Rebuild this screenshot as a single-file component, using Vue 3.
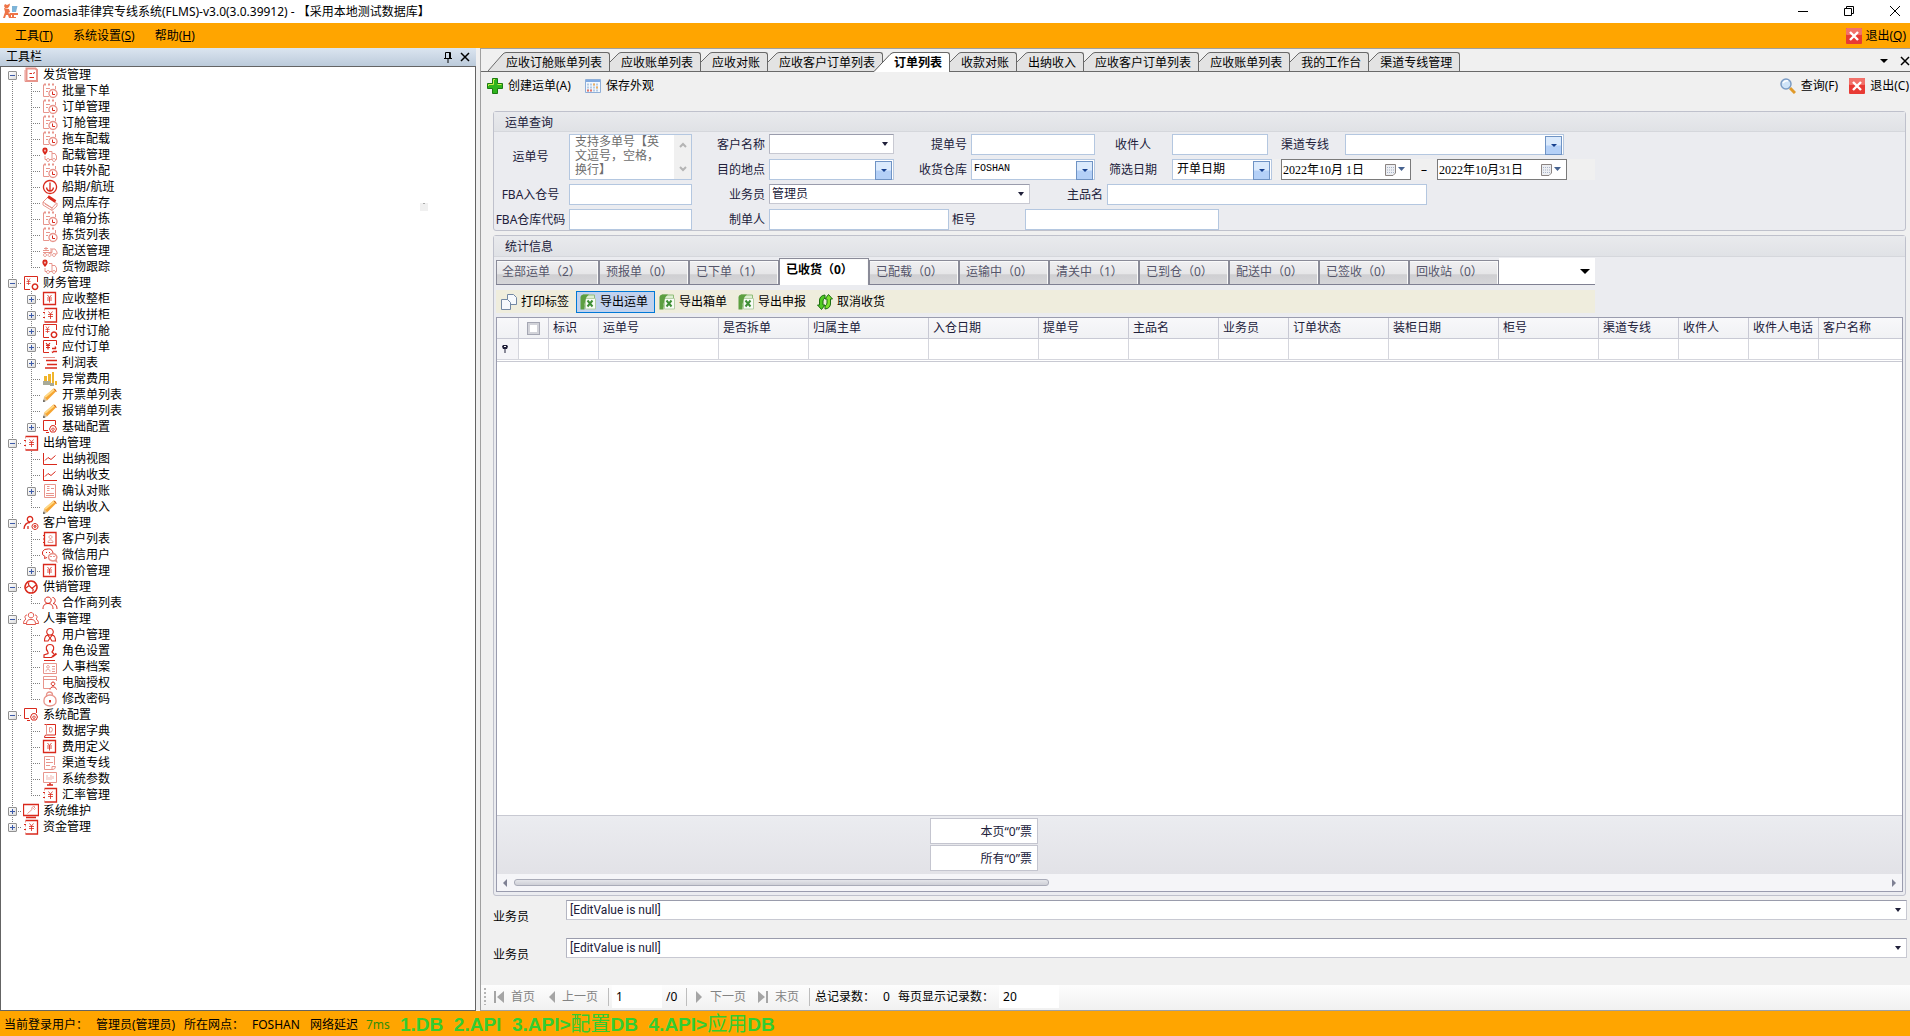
<script setup>
import { ref } from 'vue'

const R = '#d9291c'
const P = '#e8958c'

// Each icon is a list of shapes on a 16x16 grid: d = path, s = stroke, f = fill, w = stroke width.
const icons = {
  doc: [{ d: 'M2 3V14.500H11', s: P }, { d: 'M3.500 1.500H12.500L14 3V14H3.500Z', s: P, w: 2 }, { d: 'M6.500 6.500H9M10 6.500l2-1M6.500 10.500H11', s: R }],
  order: [{ d: 'M7 13.500H1.500V1.500M13.500 3V6', s: P }, { d: 'M2 1.500H13', s: P, w: 2, dash: '2 2' }, { d: 'M4 5.500H8M4 8.500H6', s: P }, { d: 'M11 6.500a4 4 0 1 0 .01 0Z', s: P, w: 1.300 }, { d: 'M10.500 8.500V11.500H13', s: R }],
  truck: [{ d: 'M3 6.500C.500 4 1 1.500 3 1.500S5.500 4 3 6.500Z', s: R, w: 2 }, { d: 'M3 9V12.500H5M7 4.500H10V12.500M10 6.500H13L14.500 9V12.500H13M7 12.500H10', s: P }, { d: 'M6 11.500a1.500 1.500 0 1 0 .01 0M12 11.500a1.500 1.500 0 1 0 .01 0', s: P }],
  anchor: [{ d: 'M8 1.500a6.500 6.500 0 1 0 .01 0Z', s: R, w: 1.300 }, { d: 'M8 5V12M4.500 8.500C5 11 6.500 12 8 12S11 11 11.500 8.500M8 3.500v2', s: R, w: 1.300 }],
  box: [{ d: 'M1 7L6 2L14.500 8L10 13ZM1 7V10L10 15.500L15 11V8M3 9L10 13V15', s: P }, { d: 'M6 1.500L13.500 6.500', s: R, w: 3 }],
  cart: [{ d: 'M1 7.500H7M2 5.500H6M4 4V7M1 9.500H10V6H13L15 9V11H13M9 5V11', s: P }, { d: 'M3 10.500a1.500 1.500 0 1 0 .01 0M7.500 10.500a1.500 1.500 0 1 0 .01 0M12 10.500a1.500 1.500 0 1 0 .01 0', s: P }],
  yenGear: [{ d: 'M7 14.500H1.500V1.500H14.500V7', s: R }, { d: 'M4 3.500L5.500 6L7 3.500M3.500 6.500H7.500M3.500 8.500H7.500M5.500 6V10', s: R, w: 0.700 }, { d: 'M12 9a2.700 2.700 0 1 0 .01 0Z', s: R, w: 1.500 }],
  yenBox: [{ d: 'M1.500 1.500H13.500V13.500H1.500Z', s: R, w: 1.300 }, { d: 'M5.500 4L7.500 6.500L9.500 4M5 7H10M5 9H10M7.500 6.500V11.500', s: R, w: 0.800 }],
  yenBook: [{ d: 'M2.500 1.500H14.500V15H2.500', s: R, w: 1.300 }, { d: 'M2.500 1.500V15', s: P, dash: '2 2' }, { d: 'M1 5.500H3M1 10.500H3', s: R }, { d: 'M6.500 4.500L8.500 7L10.500 4.500M6 7.500H11M6 9.500H11M8.500 7V12', s: R, w: 0.800 }],
  yenPay: [{ d: 'M7 13.500H1.500V1.500H14.500V6', s: R }, { d: 'M4 4L6 6.500L8 4M4 6.500H8M4 8.500H8M6 6V10.500', s: R, w: 1.200 }, { d: 'M10 9.500H14M11 12.500H15M13 7.500L14 9.500M11 14L10 12.500', s: R, w: 1.300 }],
  lines: [{ d: 'M1 2.500H13', s: P }, { d: 'M4 5.500H15M5 9.500H15', s: R, w: 1.500 }, { d: 'M3 13H15', s: R, w: 1.500 }],
  bars: [{ d: 'M2 5H5V14H2ZM6 3H9V13H6ZM10 1H12V13H10ZM13 10H15V14H13Z', f: '#f0b52c' }, { d: 'M1 10H8V14H1ZM8 12H12V15H8Z', f: '#a8aa98' }],
  pencil: [{ d: 'M2 10L11.500 1.500Q14 1 14.500 4L5 13.500Z', f: '#f6a532' }, { d: 'M3 10L12 2.500', s: '#ffd985', w: 2 }, { d: 'M2 10L5 13.500L1 15Z', f: '#d8c09a' }, { d: 'M1.500 12.500L3.500 14.500L1 15Z', f: '#555' }, { d: 'M12 2L14.500 4.500', s: '#c76a35' }],
  setGear: [{ d: 'M6 11.500H1.500V1.500H13.500V6M4 13.500H7', s: R }, { d: 'M11 6.500L13 7L14.500 10L13 13L9 13L7.500 10L9 7ZM11 9a1.200 1.200 0 1 0 .01 0', s: R }],
  chart: [{ d: 'M1.500 2V13.500H15', s: R }, { d: 'M3 9.500L6 6.500L9 8.500L13.500 4.500', s: R }],
  receipt: [{ d: 'M2.500 1.500H13.500V14.500H2.500Z', s: P }, { d: 'M5 3.500H7.500M5 5.500H7.500M5 7.500H7.500M9 5.500H12M4 10.500H12M4 12.500H12', s: P }],
  personGear: [{ d: 'M7 1.500a2.700 2.700 0 1 0 .01 0ZM1 14C1.500 9 4 7.500 7 7.500M5 14V11', s: R, w: 1.300 }, { d: 'M12 8.500a3 3 0 1 0 .01 0M12 10.500a1 1 0 1 0 .01 0', s: R }],
  contact: [{ d: 'M2.500 1.500H14V14.500H2.500Z', s: R, w: 1.300 }, { d: 'M1 4.500H3M1 8H3M1 11.500H3', s: R }, { d: 'M8.500 4.500a1.500 1.500 0 1 0 .01 0M6 11.500C6 8 11 8 11 11.500Z', s: P }],
  wechat: [{ d: 'M6 2a5 4 0 0 0-3 7.500L2.500 11.500L5 10.500M11 6C10 1 6 2 6 2', s: R }, { d: 'M10.500 6.500a4.500 3.700 0 1 0 2.500 7L14.500 14.500L14 12.500C16 10 14 6.500 10.500 6.500Z', s: P, w: 1.500 }, { d: 'M4.500 5V6M7.500 5V6M9 9V10M12 9V10', s: R }],
  supply: [{ d: 'M8 2a6 6 0 1 0 .01 0Z', s: R, w: 1.500 }, { d: 'M3 9L6 6.500L9 9.500L13 6M6 3.500C5 5 5.500 6 6.500 6.500M9 9.500C10.500 10 10.500 11 9.500 12.500', s: R, w: 1.200 }],
  people2: [{ d: 'M6 2a3.200 3.200 0 1 0 .01 0ZM1 14C1 10 3 8.500 6 8.500S11 10 11 14', s: R }, { d: 'M10.500 2.500C14 2.500 14 8 11 8.500C14 9 15 11 15 14', s: R }],
  people3: [{ d: 'M8 1.500a2.700 2.700 0 1 0 .01 0ZM3.500 13.500C3.500 9.500 5 8.500 8 8.500S12.500 9.500 12.500 13.500ZM4 4C1.500 4 1.500 7 3 8C1 9 .500 11 .500 12.500H3M12 4C14.500 4 14.500 7 13 8C15 9 15.500 11 15.500 12.500H13', s: R, w: 0.800 }],
  user: [{ d: 'M8 1.500a3.300 3.300 0 1 0 .01 0ZM2.500 14C2.500 10.500 4 8.500 5.500 8L8 11L10.500 8C12 8.500 13.500 10.500 13.500 14H10L8 11L6 14Z', s: R, w: 1.100 }],
  role: [{ d: 'M6 9C3 6 4 1.500 8 1.500S13 6 10 9L12 11M6 9L6 10.500L2 12V14.500H10', s: R, w: 1.200 }, { d: 'M10 14L14.500 10.500', s: R, w: 2 }],
  card: [{ d: 'M2 1.500H13', s: R }, { d: 'M1.500 4.500H14.500V14.500H1.500Z', s: P }, { d: 'M6 6.500a1.300 1.300 0 1 0 .01 0M4 12.500C4 9.500 8 9.500 8 12.500M10 7.500H13M10 10H13M10 12.500H13', s: P }],
  winUser: [{ d: 'M8 13.500H1.500V1.500H14.500V6M1.500 4.500H14.500', s: P }, { d: 'M11 7a1.800 1.800 0 1 0 .01 0M8 14.500C8.500 11 13.500 11 14.500 14.500', s: R }],
  lock: [{ d: 'M2 9a6 5 0 0 1 12 0V11a6 4 0 0 1-12 0Z', s: P, w: 1.300 }, { d: 'M4.500 6V4C4.500 0 10.500 0 10.500 4', s: P, w: 1.300 }, { d: 'M8 9V11.500', s: R, w: 2 }],
  dict: [{ d: 'M2.500 1.500H13.500V12H4Q2.500 12 2.500 14.500H13.500', s: R }, { d: 'M4.500 1.500V12', s: P }, { d: 'M7.500 4.500H9.500Q11.500 6.500 9.500 9H7.500Z', s: P }],
  docLines: [{ d: 'M2.500 14.500V1.500H12.500V10M2.500 14.500H11Q13.500 14 13.500 11.500H10V14', s: P }, { d: 'M4 4.500H8M4 7.500H11M4 10.500H8', s: P }],
  monitor: [{ d: 'M1.500 1.500H14.500V11.500H1.500Z', s: P }, { d: 'M5 4V9M7 6V9M9 4V9M11 5V8', s: P, w: 0.700 }, { d: 'M5 14H11M8 12V14', s: R, w: 1.500 }],
  wrench: [{ d: 'M.500 1.500H15.500V12.500H.500ZM3 14.500H13', s: R, w: 1.300 }, { d: 'M4.500 10.500L9 6.500C8 4 11 2.500 12 4L10.500 5.500L11.500 6.500L12.500 5.500', s: P }],
}

const tree = [
  { t: '发货管理', i: 'doc', c: [
    ['批量下单', 'order'], ['订单管理', 'order'], ['订舱管理', 'order'], ['拖车配载', 'order'],
    ['配载管理', 'truck'], ['中转外配', 'order'], ['船期/航班', 'anchor'], ['网点库存', 'box'],
    ['单箱分拣', 'order'], ['拣货列表', 'order'], ['配送管理', 'cart'], ['货物跟踪', 'truck'] ] },
  { t: '财务管理', i: 'yenGear', c: [
    ['应收整柜', 'yenBox', 1], ['应收拼柜', 'yenBook', 1], ['应付订舱', 'yenGear', 1], ['应付订单', 'yenPay', 1],
    ['利润表', 'lines', 1], ['异常费用', 'bars'], ['开票单列表', 'pencil'], ['报销单列表', 'pencil'], ['基础配置', 'setGear', 1] ] },
  { t: '出纳管理', i: 'yenBook', c: [
    ['出纳视图', 'chart'], ['出纳收支', 'chart'], ['确认对账', 'receipt', 1], ['出纳收入', 'pencil'] ] },
  { t: '客户管理', i: 'personGear', c: [ ['客户列表', 'contact'], ['微信用户', 'wechat'], ['报价管理', 'yenBox', 1] ] },
  { t: '供销管理', i: 'supply', c: [ ['合作商列表', 'people2'] ] },
  { t: '人事管理', i: 'people3', c: [
    ['用户管理', 'user'], ['角色设置', 'role'], ['人事档案', 'card'], ['电脑授权', 'winUser'], ['修改密码', 'lock'] ] },
  { t: '系统配置', i: 'setGear', c: [
    ['数据字典', 'dict'], ['费用定义', 'yenBox'], ['渠道专线', 'docLines'], ['系统参数', 'monitor'], ['汇率管理', 'yenBook'] ] },
  { t: '系统维护', i: 'wrench', c: [] },
  { t: '资金管理', i: 'yenBook', c: [] },
]

const menus = [['工具', 'T'], ['系统设置', 'S'], ['帮助', 'H']]
const docTabs = ['应收订舱账单列表', '应收账单列表', '应收对账', '应收客户订单列表', '订单列表', '收款对账', '出纳收入', '应收客户订单列表', '应收账单列表', '我的工作台', '渠道专线管理']
const activeDoc = ref(4)
const statusTabs = ['全部运单（2）', '预报单（0）', '已下单（1）', '已收货（0）', '已配载（0）', '运输中（0）', '清关中（1）', '已到仓（0）', '配送中（0）', '已签收（0）', '回收站（0）']
const activeStatus = ref(3)
const exportsBar = ['导出运单', '导出箱单', '导出申报']
const columns = [['标识', 50], ['运单号', 120], ['是否拆单', 90], ['归属主单', 120], ['入仓日期', 110], ['提单号', 90], ['主品名', 90], ['业务员', 70], ['订单状态', 100], ['装柜日期', 110], ['柜号', 100], ['渠道专线', 80], ['收件人', 70], ['收件人电话', 70], ['客户名称', 0]]
const dateFrom = ref('2022年10月 1日')
const dateTo = ref('2022年10月31日')
const page = ref('1')
const pageSize = ref('20')
</script>

<template>
  <div class="app">
    <header class="titlebar">
      <svg class="i16" viewBox="0 0 16 16"><path d="M3 1L5 2L8 .500L7.500 3L6 5L3 5L2 3ZM2 5L7 6L8 9L6 10L9 11V15H7L6 12H4L3 15H1L3 9Z" fill="#ee7447" /><path d="M10 3H15.500L14 9H10Z" fill="#7db4d8" /><path d="M8 10H16V12H12V14H14V15H9V14H10V12H8Z" fill="#ee7447" /></svg>
      <h1>Zoomasia菲律宾专线系统(FLMS)-v3.0(3.0.39912) - 【采用本地测试数据库】</h1>
      <div class="winbtns">
        <button aria-label="最小化"><svg viewBox="0 0 12 12"><path d="M1 6.500H11" /></svg></button>
        <button aria-label="还原"><svg viewBox="0 0 12 12"><path d="M1.500 3.500H8.500V10.500H1.500ZM3.500 3.500V1.500H10.500V8.500H8.500" /></svg></button>
        <button aria-label="关闭"><svg viewBox="0 0 12 12"><path d="M1 1L11 11M11 1L1 11" /></svg></button>
      </div>
    </header>

    <nav class="menubar">
      <button v-for="m in menus" :key="m[1]">{{ m[0] }}(<u>{{ m[1] }}</u>)</button>
      <button class="exit">
        <svg class="i16" viewBox="0 0 16 16"><rect width="16" height="16" rx="1" fill="#e83a34" /><rect width="16" height="7" rx="1" fill="#f2716a" /><path d="M4 4L12 12M12 4L4 12" stroke="#fff" stroke-width="2.400" /></svg>
        <span>退出(<u>Q</u>)</span>
      </button>
    </nav>

    <div class="body">
      <aside class="side">
        <div class="side-head">
          <h2>工具栏</h2>
          <button aria-label="固定"><svg width="10" height="12" viewBox="0 0 10 12"><path d="M2.500 7V1.500H7.500V7M6.500 2V7M1 7.500H9M5 8V12" fill="none" stroke="#000" /></svg></button>
          <button aria-label="关闭"><svg width="10" height="10" viewBox="0 0 10 10"><path d="M1 1L9 9M9 1L1 9" stroke="#000" stroke-width="1.500" /></svg></button>
        </div>
        <div class="side-body">
          <ul class="tree">
            <li v-for="(n, k) in tree" :key="n.t">
              <div class="row">
                <span class="guide arm" :class="{ first: k === 0, last: k === tree.length - 1 }"><i class="exp" :class="{ plus: !n.c.length }"></i></span>
                <svg class="i16" viewBox="0 0 16 16"><path v-for="(p, j) in icons[n.i]" :key="j" :d="p.d" :fill="p.f || 'none'" :stroke="p.s || 'none'" :stroke-width="p.w || 1" :stroke-dasharray="p.dash" /></svg>
                <span>{{ n.t }}</span>
              </div>
              <ul v-if="n.c.length">
                <li v-for="(c, m) in n.c" :key="c[0]" class="row">
                  <span class="guide"></span>
                  <span class="guide arm" :class="{ last: m === n.c.length - 1 }"><i v-if="c[2]" class="exp plus"></i></span>
                  <svg class="i16" viewBox="0 0 16 16"><path v-for="(p, j) in icons[c[1]]" :key="j" :d="p.d" :fill="p.f || 'none'" :stroke="p.s || 'none'" :stroke-width="p.w || 1" :stroke-dasharray="p.dash" /></svg>
                  <span>{{ c[0] }}</span>
                </li>
              </ul>
            </li>
          </ul>
          <span class="float-mark"></span>
        </div>
      </aside>

      <main class="main">
        <div class="doctabs">
          <button v-for="(t, k) in docTabs" :key="k" :class="{ on: k === activeDoc, first: k === 0 }" @click="activeDoc = k">
            <svg v-if="k === activeDoc" width="20" height="20" viewBox="0 0 20 20"><path d="M0 19.500L16 2.500Q18 .500 20 .500V20H0Z" fill="#fff" /><path d="M0 19.500L16 2.500Q18 .500 20 .500" fill="none" stroke="#5a5a5a" /></svg>
            <svg v-else-if="k === 0" width="18" height="20" viewBox="0 0 18 20"><path d="M0 19L14 3Q16 .500 18 .500V19Z" fill="#e3e3e3" /><path d="M0 19L14 3Q16 .500 18 .500" fill="none" stroke="#6a6a6a" /></svg>
            <svg v-else width="11" height="20" viewBox="0 0 11 20"><path d="M0 10L7 3Q9 .500 11 .500V19H0Z" fill="#e3e3e3" /><path d="M0 10L7 3Q9 .500 11 .500" fill="none" stroke="#6a6a6a" /></svg>
            <span>{{ t }}</span>
          </button>
          <div class="tabctl">
            <button aria-label="标签列表"><svg width="8" height="4" viewBox="0 0 8 4"><path d="M0 0H8L4 4Z" /></svg></button>
            <button aria-label="关闭标签"><svg width="10" height="10" viewBox="0 0 10 10"><path d="M1 1L9 9M9 1L1 9" stroke="#000" stroke-width="1.500" /></svg></button>
          </div>
        </div>

        <div class="toolbar">
          <button>
            <svg class="i16" viewBox="0 0 16 16"><path d="M5.500 .500H10.500V5.500H15.500V10.500H10.500V15.500H5.500V10.500H.500V5.500H5.500Z" fill="#2fb51d" stroke="#1c7a12" /><path d="M6.500 6.500V1.500H8M1.500 8V6.500H6.500M10.500 6.500H14.500" fill="none" stroke="#c9ee4c" /></svg>
            <span>创建运单(A)</span>
          </button>
          <button>
            <svg class="i16" viewBox="0 0 16 16"><path d="M.500 1.500H15.500V14.500H.500Z" fill="#f4f8fd" stroke="#8fafd8" /><path d="M1 2H15V4H1Z" fill="#7fa9e0" /><path d="M2 6.500H14M2 9.500H14M2 12.500H14" stroke="#b4cbe4" stroke-width="2" stroke-dasharray="2 1" /><path d="M8 6.500H10M11 9.500H13" stroke="#f0b060" stroke-width="2" /><path d="M2 12.500H7" stroke="#e8786a" stroke-width="2" stroke-dasharray="2 1" /></svg>
            <span>保存外观</span>
          </button>
          <div class="right">
            <button>
              <svg class="i16" viewBox="0 0 16 16"><path d="M10 10L15 15" stroke="#e09a2a" stroke-width="3" /><circle cx="6" cy="6" r="5" fill="#cfe4f8" stroke="#7b9cc4" stroke-width="1.500" /><path d="M3 5Q5 2 8 3" stroke="#fff" fill="none" stroke-width="1.500" /></svg>
              <span>查询(F)</span>
            </button>
            <button>
              <svg class="i16" viewBox="0 0 16 16"><rect width="16" height="16" rx="1" fill="#e83a34" /><rect width="16" height="7" rx="1" fill="#f2716a" /><path d="M4 4L12 12M12 4L4 12" stroke="#fff" stroke-width="2.400" /></svg>
              <span>退出(C)</span>
            </button>
          </div>
        </div>

        <section class="group">
          <h3>运单查询</h3>
          <form class="query" @submit.prevent>
            <div class="qleft">
              <label for="no">运单号</label>
              <div class="memo"><textarea id="no" placeholder="支持多单号【英文逗号，空格，换行】"></textarea><span class="vbar"><svg width="8" height="6" viewBox="0 0 8 6"><path d="M1 5L4 2L7 5" /></svg><svg width="8" height="6" viewBox="0 0 8 6"><path d="M1 1L4 4L7 1" /></svg></span></div>
              <label for="fba1">FBA入仓号</label><input id="fba1" class="tx">
              <label for="fba2">FBA仓库代码</label><input id="fba2" class="tx">
            </div>
            <div class="qright">
              <div class="line">
                <label class="l1" for="cust">客户名称</label>
                <div class="combo flat w125"><select id="cust"><option></option></select></div>
                <label class="l2" for="bl">提单号</label><input id="bl" class="tx w124">
                <label class="l3 short" for="rcv">收件人</label><input id="rcv" class="tx w96">
                <label class="l4" for="ch">渠道专线</label>
                <div class="combo w219"><select id="ch"><option></option></select></div>
              </div>
              <div class="line">
                <label class="l1" for="dest">目的地点</label>
                <div class="combo w125"><select id="dest"><option></option></select></div>
                <label class="l2" for="wh">收货仓库</label>
                <div class="combo mono w124"><select id="wh"><option>FOSHAN</option></select></div>
                <label class="l3" for="dt">筛选日期</label>
                <div class="combo w100 pad"><select id="dt"><option>开单日期</option></select></div>
                <div class="dates">
                  <div class="date"><input v-model="dateFrom" aria-label="开始日期"><svg width="22" height="14" viewBox="0 0 22 14"><path d="M1.500 1.500H11.500V10L9 12.500H1.500Z" fill="#eceef2" stroke="#8b8482" /><path d="M3 4.500H10M3 7H10M3 9.500H10" stroke="#a9b4c8" stroke-dasharray="1 1" /><path d="M14 4H21L17.500 8Z" fill="#46628f" /></svg></div>
                  <span>–</span>
                  <div class="date"><input v-model="dateTo" aria-label="结束日期"><svg width="22" height="14" viewBox="0 0 22 14"><path d="M1.500 1.500H11.500V10L9 12.500H1.500Z" fill="#eceef2" stroke="#8b8482" /><path d="M3 4.500H10M3 7H10M3 9.500H10" stroke="#a9b4c8" stroke-dasharray="1 1" /><path d="M14 4H21L17.500 8Z" fill="#46628f" /></svg></div>
                </div>
              </div>
              <div class="line">
                <label class="l1" for="sales">业务员</label>
                <div class="combo flat w261"><select id="sales"><option>管理员</option></select></div>
                <label class="l5" for="prod">主品名</label><input id="prod" class="tx w320">
              </div>
              <div class="line">
                <label class="l1" for="maker">制单人</label><input id="maker" class="tx w180">
                <label class="l6" for="cab">柜号</label><input id="cab" class="tx w194">
              </div>
            </div>
          </form>
        </section>

        <section class="group stats">
          <h3>统计信息</h3>
          <div class="sbody">
            <div class="stabs">
              <button v-for="(t, k) in statusTabs" :key="t" :class="{ on: k === activeStatus, wide: k === 0 }" @click="activeStatus = k">{{ t }}</button>
              <button class="more" aria-label="更多状态"><svg width="10" height="5" viewBox="0 0 10 5"><path d="M0 0H10L5 5Z" /></svg></button>
            </div>
            <div class="actions">
              <button>
                <svg class="i16" viewBox="0 0 16 16"><path d="M6.500 .500H12.500L15.500 3.500V10.500H6.500Z" fill="#f6f9fd" stroke="#7288a4" /><path d="M.500 5.500H6.500L9.500 8.500V15.500H.500Z" fill="#f6f9fd" stroke="#7288a4" /></svg>
                <span>打印标签</span>
              </button>
              <button v-for="(e, k) in exportsBar" :key="e" :class="{ hot: k === 0 }">
                <svg class="i16" viewBox="0 0 16 16"><path d="M3 1H14.500V12H3Z" fill="#dcefd2" stroke="#8fbc78" /><path d="M5.500 4.500H15.500V15H5.500Z" fill="#f8fcf6" stroke="#b4cfa6" /><path d="M.500 3Q.500 1 3 .500H9Q4 4 4.500 15.500H.500Z" fill="#5c9f40" /><path d="M7.500 6.500L12.500 12.500M12.500 6.500L7.500 12.500" stroke="#3e8f35" stroke-width="2" /></svg>
                <span>{{ e }}</span>
              </button>
              <button>
                <svg class="i16" viewBox="0 0 16 16"><path d="M4.500 15.500L.500 11H2.500V6Q3 1.500 8 1V4Q6 5 6 7V11H8Z" fill="#4fcb22" stroke="#1d6e12" /><path d="M11.500 .500L15.500 5H13.500V10Q13 14.500 8 15V12Q10 11 10 9V5H8Z" fill="#7ce02e" stroke="#1d6e12" /></svg>
                <span>取消收货</span>
              </button>
            </div>

            <div class="grid">
              <table>
                <colgroup><col class="c22"><col class="c30"><col v-for="c in columns" :key="c[0]" :style="c[1] ? { width: c[1] + 'px' } : null"></colgroup>
                <thead>
                  <tr><th></th><th class="ck"><input type="checkbox" aria-label="全选"></th><th v-for="c in columns" :key="c[0]">{{ c[0] }}</th></tr>
                </thead>
                <tbody>
                  <tr><td class="ind"><svg width="6" height="8" viewBox="0 0 6 8"><path d="M1 0H5L6 1.500L5 4H3.500V8H2.500V4H1L0 1.500Z" fill="#20203a" /><path d="M2 1.500H4" stroke="#fff" /></svg></td><td></td><td v-for="c in columns" :key="c[0]"></td></tr>
                </tbody>
              </table>
              <div class="rows"></div>
              <div class="foot"><span>本页“0”票</span><span>所有“0”票</span></div>
              <div class="hbar">
                <svg width="4" height="8" viewBox="0 0 4 8"><path d="M4 0V8L0 4Z" /></svg>
                <div class="track"><div class="thumb"></div></div>
                <svg width="4" height="8" viewBox="0 0 4 8"><path d="M0 0V8L4 4Z" /></svg>
              </div>
            </div>
          </div>
        </section>

        <div class="lower">
          <div v-for="n in 2" :key="n" class="lrow">
            <label :for="'ev' + n">业务员</label>
            <div class="combo flat ev"><select :id="'ev' + n"><option>[EditValue is null]</option></select></div>
          </div>
        </div>

        <div class="pager">
          <span class="grip"></span>
          <button class="p1"><svg width="10" height="12" viewBox="0 0 10 12"><path d="M0 0H2V12H0ZM10 0V12L3 6Z" /></svg>首页</button>
          <button class="p2"><svg width="6" height="12" viewBox="0 0 6 12"><path d="M6 0V12L0 6Z" /></svg>上一页</button>
          <span class="sep"></span>
          <input v-model="page" class="pg" aria-label="页码">
          <span class="tot">/0</span>
          <span class="sep"></span>
          <button class="p3"><svg width="6" height="12" viewBox="0 0 6 12"><path d="M0 0V12L6 6Z" /></svg>下一页</button>
          <button class="p4"><svg width="10" height="12" viewBox="0 0 10 12"><path d="M8 0H10V12H8ZM0 0V12L7 6Z" /></svg>末页</button>
          <span class="sep"></span>
          <span class="cnt">总记录数：</span><span class="zero">0</span>
          <label for="ps">每页显示记录数：</label>
          <input id="ps" v-model="pageSize" class="ps">
        </div>
      </main>
    </div>

    <footer class="status">
      <span class="s1">当前登录用户：</span><span class="s2">管理员(管理员)</span><span class="s3">所在网点：</span><span class="s4">FOSHAN</span><span class="s5">网络延迟</span><span class="ms">7ms</span>
      <span class="keys">1.DB&nbsp; 2.API&nbsp; 3.API&gt;<span>配置</span>DB&nbsp; 4.API&gt;<span>应用</span>DB</span>
    </footer>
  </div>
</template>

<style>
body { margin: 0; background: #f0f0f0; }
</style>

<style scoped>
.app { display: flex; flex-direction: column; height: 100vh; overflow: hidden; background: #f0f0f0; color: #000; font: 12px/16px "Noto Sans", "Noto Sans CJK SC", sans-serif; }
.app * { box-sizing: border-box; }
button, input, select, textarea { font: inherit; color: inherit; margin: 0; padding: 0; border: 0; border-radius: 0; background: none; outline: none; }
button { display: flex; align-items: center; white-space: nowrap; }
h1, h2, h3, ul { margin: 0; padding: 0; font-weight: 400; font-size: 12px; list-style: none; }
label, span { white-space: nowrap; }
.i16 { width: 16px; height: 16px; flex: none; display: block; }

.titlebar { display: flex; align-items: center; height: 23px; flex: none; padding: 0 9px 2px 2px; background: #fff; }
.titlebar h1 { margin-left: 5px; padding-top: 2px; flex: 1; }
.winbtns { display: flex; gap: 34px; }
.winbtns svg { width: 12px; height: 12px; fill: none; stroke: #000; }
.winbtns button { width: 12px; }

.menubar { display: flex; align-items: center; height: 25px; flex: none; padding: 0 4px 0 15px; gap: 20px; background: #ffa500; }
.menubar .exit { margin-left: auto; gap: 3px; }

.body { display: flex; flex: 1; min-height: 0; gap: 4px; }
.side { width: 476px; flex: none; display: flex; flex-direction: column; }
.side-head { display: flex; align-items: center; height: 18px; padding: 0 6px; gap: 7px; background: linear-gradient(#dbe5f0, #bccbdb); }
.side-head h2 { flex: 1; line-height: 20px; }
.side-body { position: relative; flex: 1; min-height: 0; overflow: hidden; background: #fff; border: 1px solid #646464; }
.row { display: flex; height: 16px; align-items: center; padding-left: 2px; }
.row > .i16 { margin: 0 4px 0 1px; }
.guide { position: relative; width: 19px; height: 16px; flex: none; background: repeating-linear-gradient(#808080 0 1px, transparent 1px 2px) 9px 0 / 1px 100% no-repeat; }
.guide.first { background-position: 9px 8px; }
.guide.last { background-size: 1px 8px; }
.guide.arm::after { content: ""; position: absolute; left: 9px; right: 0; top: 8px; height: 1px; background: repeating-linear-gradient(90deg, #808080 0 1px, transparent 1px 2px); }
.exp { position: absolute; z-index: 1; left: 5px; top: 4px; width: 9px; height: 9px; border: 1px solid #919191; border-radius: 1px; background: linear-gradient(#3c5aa8, #3c5aa8) 1px 3px / 5px 1px no-repeat, linear-gradient(135deg, #fff, #dcdcdc); }
.exp.plus { background: linear-gradient(#3c5aa8, #3c5aa8) 1px 3px / 5px 1px no-repeat, linear-gradient(#3c5aa8, #3c5aa8) 3px 1px / 1px 5px no-repeat, linear-gradient(135deg, #fff, #dcdcdc); }
.float-mark { position: absolute; left: 419px; top: 136px; width: 8px; height: 8px; background: linear-gradient(#aaa, #aaa) 3px 0 / 2px 1px no-repeat, #f0f0f0; }

.main { flex: 1; min-width: 0; display: flex; flex-direction: column; overflow: hidden; border: solid #a0a0a0; border-width: 1px 0 1px 1px; }
.doctabs { display: flex; align-items: flex-end; height: 23px; flex: none; padding-left: 7px; border-bottom: 1px solid #696969; }
.doctabs > button { position: relative; height: 19px; }
.doctabs > button > svg { display: block; flex: none; height: 20px; margin-bottom: -1px; }
.doctabs > button > span { height: 19px; line-height: 20px; padding-right: 7px; background: #e3e3e3; border: solid #696969; border-width: 1px 1px 0 0; border-top-right-radius: 3px; }
.doctabs > button.on { z-index: 1; margin-left: -9px; font-weight: 700; }
.doctabs > button.on > span { background: #fff; height: 20px; margin-bottom: -1px; }
.tabctl { display: flex; align-items: center; gap: 11px; margin-left: auto; height: 20px; }
.tabctl button:first-child { padding-right: 1px; }

.toolbar { display: flex; align-items: center; height: 28px; flex: none; padding-left: 6px; gap: 14px; }
.toolbar button { gap: 5px; }
.toolbar .right { display: flex; gap: 11px; margin-left: auto; padding-right: 1px; }

.group { flex: none; margin: 11px 4px 0 12px; border: 1px solid #bfc1cc; border-radius: 3px; background: #ebecf0; color: #20203a; }
.group h3 { height: 20px; line-height: 22px; padding-left: 11px; border-bottom: 1px solid #d5d7dc; background: linear-gradient(#e9eaed, #e0e2e6); }
.query { display: flex; padding-top: 2px; }
.qleft { display: grid; grid-template-columns: 75px 123px; grid-template-rows: 46px 21px 21px; row-gap: 4px; align-items: center; justify-items: center; }
.qleft label { padding-right: 2px; }
.qleft .tx { width: 100%; }
.memo { display: flex; width: 100%; height: 46px; border: 1px solid #b4c7e0; background: #fff; }
.memo textarea { flex: 1; min-width: 0; height: 44px; padding: 0 6px 0 5px; line-height: 14px; resize: none; overflow: hidden; }
.memo textarea::placeholder { color: #6d6d6d; opacity: 1; }
.vbar { display: flex; flex-direction: column; justify-content: space-between; align-items: center; width: 17px; padding: 7px 0; background: #f0f0f0; }
.vbar svg { fill: none; stroke: #b4b4b4; stroke-width: 2; }
.qright { flex: 1; min-width: 0; display: flex; flex-direction: column; gap: 4px; }
.line { display: flex; align-items: center; height: 21px; }
.line label { text-align: right; flex: none; }
.l1, .l2, .l5 { width: 73px; margin-right: 4px; }
.l3 { width: 62px; margin-right: 15px; }
.l3.short { width: 56px; margin-right: 21px; }
.l4 { width: 61px; margin-right: 16px; }
.line .l6 { width: 76px; text-align: left; padding-left: 3px; }
.tx { height: 21px; padding: 0 4px; border: 1px solid #b4c7e0; background: #fff; flex: none; }
.w96 { width: 96px; } .w100 { width: 100px; } .w124 { width: 124px; } .w125 { width: 125px; } .w180 { width: 180px; }
.w194 { width: 194px; } .w219 { width: 219px; } .w261 { width: 261px; } .w320 { width: 320px; }
.combo { position: relative; flex: none; height: 21px; border: 1px solid #b4c7e0; background: #fff; color: #000; }
.combo select { appearance: none; display: block; width: 100%; height: 100%; padding: 0 20px 2px 2px; }
.combo::before { content: ""; position: absolute; right: 1px; top: 1px; width: 15px; height: 17px; border: 1px solid #6f93c4; background: linear-gradient(#dbeafc 45%, #b4d0f7 55%); pointer-events: none; }
.combo::after { content: ""; position: absolute; right: 6px; top: 9px; border: solid transparent; border-width: 3px 3px 0; border-top-color: #16408f; pointer-events: none; }
.combo.pad select { padding-left: 4px; }
.combo.mono select { font: 400 10px/16px "Liberation Mono", monospace; }
.combo.flat { height: 20px; border-color: #9a9cac #c8c9d2 #c8c9d2 #b4b6c2; align-self: flex-start; color: #20203a; }
.combo.flat select { padding-bottom: 0; }
.combo.flat::before { display: none; }
.combo.flat::after { right: 5px; top: 7px; border-width: 4px 3px 0; border-top-color: #20203a; }
.dates { display: flex; align-items: center; height: 21px; width: 323px; padding-left: 9px; background: #f0f0f0; color: #000; }
.dates > span { width: 26px; text-align: center; }
.date { position: relative; width: 130px; height: 21px; border: 1px solid #7a7a7a; background: #fff; }
.date input { width: 100px; height: 18px; padding-left: 1px; font-family: "Liberation Serif", "Noto Sans CJK SC", serif; }
.date svg { position: absolute; right: 4px; top: 3px; }

.stats { flex: 1; min-height: 0; margin-top: 4px; display: flex; flex-direction: column; }
.stats h3 { flex: none; height: 21px; }
.sbody { flex: 1; min-height: 0; display: flex; flex-direction: column; padding: 0 2px 3px; }
.stabs { display: flex; align-items: flex-end; width: 1099px; height: 28px; flex: none; border-bottom: 1px solid #7f8092; }
.stabs button { width: 90px; height: 24px; padding: 0 0 2px 6px; color: #55556a; border: solid #8a8b98; border-width: 1px 1px 0 1px; background: linear-gradient(#f0f0f2, #e6e6e8 55%, #cfcfd2 60%, #d6d6d9); box-shadow: inset -1px 1px #fafafa; }
.stabs button.wide { width: 103px; padding-left: 5px; }
.stabs button.on { height: 27px; margin-bottom: -1px; padding: 0 0 4px 6px; background: #fff; color: #000; font-weight: 700; }
.stabs .more { flex: 1; height: 26px; justify-content: flex-end; padding: 0 5px 0 0; border: 0; background: #fff; box-shadow: none; }
.actions { display: flex; align-items: center; width: 1099px; height: 23px; flex: none; margin: 5px 0 4px; padding-left: 2px; background: #efeddd; color: #000; }
.actions button { height: 22px; width: 79px; padding-left: 3px; gap: 4px; border: 1px solid transparent; }
.actions button:first-child { width: 78px; padding-left: 2px; }
.actions .hot { border-color: #0078d7; background: #c1d2ee; }

.grid { flex: 1; min-height: 0; display: flex; flex-direction: column; border: 1px solid #9a9cae; background: #fff; }
table { width: 100%; table-layout: fixed; border-collapse: separate; border-spacing: 0; flex: none; border-bottom: 1px solid #c8c9d2; padding-bottom: 1px; }
.c22 { width: 22px; } .c30 { width: 30px; }
th { height: 21px; padding: 0 0 0 4px; text-align: left; font-weight: 400; white-space: nowrap; border: solid #c8c9d4; border-width: 0 1px 1px 0; background: linear-gradient(#f8f8fa, #f0f1f4); }
td { height: 21px; padding: 0; border: solid #d5d6dd; border-width: 0 1px 1px 0; }
th:last-child, td:last-child { border-right: 0; }
.ind { background: #f5f5f8; padding-left: 5px; }
.ind svg { display: block; }
.ck { padding: 0 0 0 8px; }
.ck input { appearance: none; display: block; width: 13px; height: 13px; border: 1px solid #a4a6b2; box-shadow: inset 0 0 0 2px #d2d3d9; background: #fff; }
.rows { flex: 1; }
.foot { display: flex; flex-direction: column; gap: 1px; flex: none; height: 59px; padding: 2px 0 0 433px; border-top: 1px solid #c8c9d2; background: linear-gradient(#ebecf0, #e2e2e7); }
.foot span { width: 108px; height: 26px; line-height: 26px; padding-right: 5px; text-align: right; border: 1px solid #c4c5cf; background: #fff; }
.hbar { display: flex; align-items: center; height: 17px; flex: none; padding: 0 6px; gap: 7px; background: #f5f5f8; }
.hbar svg { fill: #7f8194; }
.track { flex: 1; }
.thumb { width: 39%; height: 7px; border: 1px solid #a9abb8; border-radius: 3px; background: linear-gradient(#e4e5ea, #cfd0d7); }

.lower { flex: none; padding: 4px 3px 27px 12px; }
.lrow { display: flex; height: 20px; margin-bottom: 18px; }
.lrow:last-child { margin-bottom: 0; }
.lrow label { width: 73px; padding-top: 9px; }
.combo.ev { flex: 1; font-family: Roboto, "Noto Sans CJK SC", sans-serif; }
.combo.ev select { padding: 0 20px 1px 3px; }

.pager { display: flex; align-items: center; height: 25px; flex: none; padding-bottom: 2px; background: linear-gradient(#fdfdfd, #f1f1f1); }
.pager button { color: #838383; gap: 7px; }
.pager button svg { fill: #a5a5a5; }
.grip { width: 2px; height: 17px; margin: 0 8px 0 3px; background: repeating-linear-gradient(#b4b4b4 0 2px, transparent 2px 4px); }
.sep { width: 1px; height: 18px; background: #bdbdbd; }
.p2 { margin: 0 10px 0 14px; }
.pg { width: 50px; height: 23px; margin: 0 4px 0 3px; padding-left: 4px; background: #fff; }
.tot { width: 20px; }
.pager .p3 { margin: 0 12px 0 9px; gap: 8px; }
.p4 { margin-right: 10px; }
.cnt { width: 68px; margin-left: 5px; }
.zero { width: 15px; }
.ps { width: 60px; height: 23px; margin-left: 5px; padding-left: 4px; background: #fff; }

.status { display: flex; align-items: center; height: 25px; flex: none; padding: 2px 0 0 4px; background: #ffa500; }
.s1 { width: 92px; } .s2 { width: 88px; } .s3 { width: 68px; } .s4 { width: 58px; } .s5 { width: 56px; }
.ms { width: 34px; color: #2f8f0a; }
.keys { font: 700 19px/22px "Liberation Sans", "Noto Sans CJK SC", sans-serif; color: #32cd32; }
.keys span { font-weight: 400; font-size: 20px; }
</style>
